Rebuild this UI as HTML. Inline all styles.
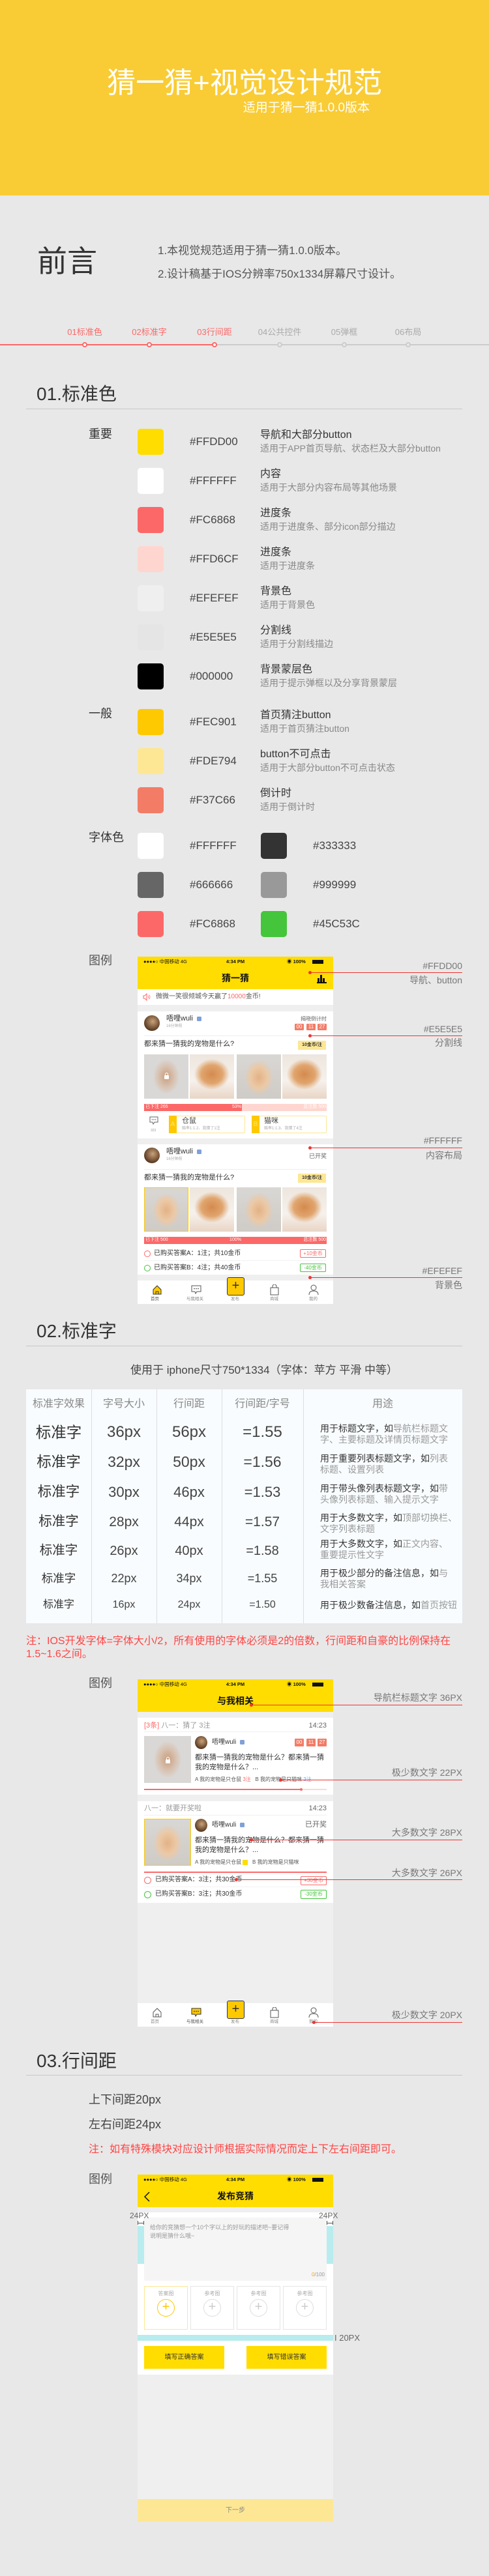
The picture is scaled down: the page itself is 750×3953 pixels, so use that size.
<!DOCTYPE html>
<html><head><meta charset="utf-8">
<style>
*{margin:0;padding:0;box-sizing:border-box}
body{width:750px;height:3953px;background:#E8E8E8;position:relative;overflow:hidden;font-family:"Liberation Sans","Noto Sans CJK SC",sans-serif;color:#333}
.a{position:absolute}
.t{position:absolute;white-space:nowrap;line-height:1.2}
.sw{position:absolute;width:40px;height:40px;border-radius:5px}
.ph{position:absolute;width:300px;height:533px;background:#EFEFEF;overflow:hidden}
.ln{position:absolute;height:1px;background:#E33}
.dot{position:absolute;width:5px;height:5px;border-radius:50%;background:#E33}
.an{position:absolute;right:41px;font-size:14px;color:#777;white-space:nowrap;line-height:1.2}
.g{color:#999}
.kit{background:radial-gradient(ellipse 40% 35% at 50% 45%,#D48A4E 0,#E0A56E 60%,rgba(240,225,210,0) 100%),linear-gradient(#EDE6DE,#F6F1EC 60%,#E9D6C6)}
.ham{background:radial-gradient(ellipse 32% 40% at 50% 52%,#E3B286 0,#EBC9A6 60%,rgba(210,205,200,0) 100%),linear-gradient(#D9D7D4,#CFCBC6)}
.blur{background:radial-gradient(ellipse 30% 40% at 50% 50%,#C99E7E 0,#D8C2B2 60%,#DAD8D6 100%)}
</style></head><body>

<!-- banner -->
<div class="a" style="left:0;top:0;width:750px;height:300px;background:#F9CC35"></div>
<div class="t" style="left:0;width:750px;text-align:center;top:102px;font-size:44px;color:#fff">猜一猜+视觉设计规范</div>
<div class="t" style="right:183px;top:155px;font-size:19px;color:#fff">适用于猜一猜1.0.0版本</div>

<!-- preface -->
<div class="t" style="left:57px;top:374px;font-size:46px;color:#333">前言</div>
<div class="t" style="left:242px;top:375px;font-size:17px;color:#555">1.本视觉规范适用于猜一猜1.0.0版本。</div>
<div class="t" style="left:242px;top:411px;font-size:17px;color:#555">2.设计稿基于IOS分辨率750x1334屏幕尺寸设计。</div>

<!-- nav -->
<div class="t" style="left:80px;width:100px;text-align:center;top:502px;font-size:13px;color:#FC6868">01标准色</div>
<div class="t" style="left:179px;width:100px;text-align:center;top:502px;font-size:13px;color:#FC6868">02标准字</div>
<div class="t" style="left:279px;width:100px;text-align:center;top:502px;font-size:13px;color:#FC6868">03行间距</div>
<div class="t" style="left:379px;width:100px;text-align:center;top:502px;font-size:13px;color:#AAA">04公共控件</div>
<div class="t" style="left:478px;width:100px;text-align:center;top:502px;font-size:13px;color:#AAA">05弹框</div>
<div class="t" style="left:576px;width:100px;text-align:center;top:502px;font-size:13px;color:#AAA">06布局</div>
<div class="a" style="left:0;top:528px;width:329px;height:2px;background:#FC6868"></div>
<div class="a" style="left:329px;top:528px;width:421px;height:2px;background:#CCC"></div>
<div class="a" style="left:126px;top:525px;width:8px;height:8px;border-radius:50%;background:#fff;border:2px solid #FC6868"></div>
<div class="a" style="left:225px;top:525px;width:8px;height:8px;border-radius:50%;background:#fff;border:2px solid #FC6868"></div>
<div class="a" style="left:325px;top:525px;width:8px;height:8px;border-radius:50%;background:#fff;border:2px solid #FC6868"></div>
<div class="a" style="left:425px;top:525px;width:8px;height:8px;border-radius:50%;background:#E8E8E8;border:2px solid #CCC"></div>
<div class="a" style="left:524px;top:525px;width:8px;height:8px;border-radius:50%;background:#E8E8E8;border:2px solid #CCC"></div>
<div class="a" style="left:622px;top:525px;width:8px;height:8px;border-radius:50%;background:#E8E8E8;border:2px solid #CCC"></div>

<!-- 01 -->
<div class="t" style="left:56px;top:588px;font-size:28px;color:#333">01.标准色</div>
<div class="a" style="left:40px;top:627px;width:669px;height:1px;background:#C8C8C8"></div>

<div class="t" style="left:136px;top:656px;font-size:18px">重要</div>
<div class="t" style="left:136px;top:1085px;font-size:18px">一般</div>
<div class="t" style="left:136px;top:1275px;font-size:18px">字体色</div>

<div class="sw" style="left:211px;top:658px;background:#FFDD00"></div>
<div class="t" style="left:291px;top:668px;font-size:17px;color:#444">#FFDD00</div>
<div class="t" style="left:399px;top:658px;font-size:16px">导航和大部分button</div>
<div class="t" style="left:399px;top:680px;font-size:14px;color:#888">适用于APP首页导航、状态栏及大部分button</div>

<div class="sw" style="left:211px;top:718px;background:#FFFFFF"></div>
<div class="t" style="left:291px;top:728px;font-size:17px;color:#444">#FFFFFF</div>
<div class="t" style="left:399px;top:718px;font-size:16px">内容</div>
<div class="t" style="left:399px;top:740px;font-size:14px;color:#888">适用于大部分内容布局等其他场景</div>

<div class="sw" style="left:211px;top:778px;background:#FC6868"></div>
<div class="t" style="left:291px;top:788px;font-size:17px;color:#444">#FC6868</div>
<div class="t" style="left:399px;top:778px;font-size:16px">进度条</div>
<div class="t" style="left:399px;top:800px;font-size:14px;color:#888">适用于进度条、部分icon部分描边</div>

<div class="sw" style="left:211px;top:838px;background:#FFD6CF"></div>
<div class="t" style="left:291px;top:848px;font-size:17px;color:#444">#FFD6CF</div>
<div class="t" style="left:399px;top:838px;font-size:16px">进度条</div>
<div class="t" style="left:399px;top:860px;font-size:14px;color:#888">适用于进度条</div>

<div class="sw" style="left:211px;top:898px;background:#EFEFEF"></div>
<div class="t" style="left:291px;top:908px;font-size:17px;color:#444">#EFEFEF</div>
<div class="t" style="left:399px;top:898px;font-size:16px">背景色</div>
<div class="t" style="left:399px;top:920px;font-size:14px;color:#888">适用于背景色</div>

<div class="sw" style="left:211px;top:958px;background:#E5E5E5"></div>
<div class="t" style="left:291px;top:968px;font-size:17px;color:#444">#E5E5E5</div>
<div class="t" style="left:399px;top:958px;font-size:16px">分割线</div>
<div class="t" style="left:399px;top:980px;font-size:14px;color:#888">适用于分割线描边</div>

<div class="sw" style="left:211px;top:1018px;background:#000000"></div>
<div class="t" style="left:291px;top:1028px;font-size:17px;color:#444">#000000</div>
<div class="t" style="left:399px;top:1018px;font-size:16px">背景蒙层色</div>
<div class="t" style="left:399px;top:1040px;font-size:14px;color:#888">适用于提示弹框以及分享背景蒙层</div>

<div class="sw" style="left:211px;top:1088px;background:#FEC901"></div>
<div class="t" style="left:291px;top:1098px;font-size:17px;color:#444">#FEC901</div>
<div class="t" style="left:399px;top:1088px;font-size:16px">首页猜注button</div>
<div class="t" style="left:399px;top:1110px;font-size:14px;color:#888">适用于首页猜注button</div>

<div class="sw" style="left:211px;top:1148px;background:#FDE794"></div>
<div class="t" style="left:291px;top:1158px;font-size:17px;color:#444">#FDE794</div>
<div class="t" style="left:399px;top:1148px;font-size:16px">button不可点击</div>
<div class="t" style="left:399px;top:1170px;font-size:14px;color:#888">适用于大部分button不可点击状态</div>

<div class="sw" style="left:211px;top:1208px;background:#F37C66"></div>
<div class="t" style="left:291px;top:1218px;font-size:17px;color:#444">#F37C66</div>
<div class="t" style="left:399px;top:1208px;font-size:16px">倒计时</div>
<div class="t" style="left:399px;top:1230px;font-size:14px;color:#888">适用于倒计时</div>

<div class="sw" style="left:211px;top:1278px;background:#FFFFFF"></div>
<div class="t" style="left:291px;top:1288px;font-size:17px;color:#444">#FFFFFF</div>
<div class="sw" style="left:400px;top:1278px;background:#333333"></div>
<div class="t" style="left:480px;top:1288px;font-size:17px;color:#444">#333333</div>
<div class="sw" style="left:211px;top:1338px;background:#666666"></div>
<div class="t" style="left:291px;top:1348px;font-size:17px;color:#444">#666666</div>
<div class="sw" style="left:400px;top:1338px;background:#999999"></div>
<div class="t" style="left:480px;top:1348px;font-size:17px;color:#444">#999999</div>
<div class="sw" style="left:211px;top:1398px;background:#FC6868"></div>
<div class="t" style="left:291px;top:1408px;font-size:17px;color:#444">#FC6868</div>
<div class="sw" style="left:400px;top:1398px;background:#45C53C"></div>
<div class="t" style="left:480px;top:1408px;font-size:17px;color:#444">#45C53C</div>

<div class="t" style="left:136px;top:1464px;font-size:18px;color:#555">图例</div>

<!-- phone 1 -->
<div class="ph" style="left:211px;top:1468px">
 <div class="a" style="left:0;top:0;width:300px;height:50px;background:#FFDD00"></div>
 <div class="t" style="left:9px;top:3px;font-size:7.5px;color:#111">●●●●○ 中国移动 4G</div>
 <div class="t" style="left:0;width:300px;text-align:center;top:3px;font-size:7.5px;color:#111;font-weight:bold">4:34 PM</div>
 <div class="t" style="left:229px;top:3px;font-size:7.5px;color:#111;font-weight:bold">◉ 100%</div>
 <div class="a" style="left:268px;top:5px;width:17px;height:6px;background:#111"></div>
 <div class="t" style="left:0;width:300px;text-align:center;top:25px;font-size:14px;color:#111;font-weight:bold">猜一猜</div>
 <div class="a" style="left:275px;top:39px;width:15px;height:2px;background:#111"></div>
 <div class="a" style="left:276px;top:33px;width:3px;height:7px;background:#111"></div>
 <div class="a" style="left:280px;top:28px;width:3px;height:12px;background:#111"></div>
 <div class="a" style="left:284px;top:33px;width:3px;height:7px;background:#111"></div>

 <div class="a" style="left:0;top:50px;width:300px;height:24px;background:#fff"></div>
 <svg class="a" style="left:8px;top:56px" width="12" height="12" viewBox="0 0 12 12"><path d="M1 4h2l3-3v10L3 8H1z" fill="none" stroke="#FC6868" stroke-width="1"/><path d="M8 4q1.5 2 0 4M9.5 2.5q3 3.5 0 7" fill="none" stroke="#FC6868" stroke-width="0.8"/></svg>
 <div class="t" style="left:28px;top:56px;font-size:10px;color:#555">微微一笑很倾城今天赢了<span style="color:#FC6868">10000</span>金币!</div>

 <div class="a" style="left:0;top:84px;width:300px;height:195px;background:#fff"></div>
 <div class="a" style="left:10px;top:90px;width:24px;height:24px;border-radius:50%;background:radial-gradient(circle at 55% 40%,#C9A27A,#5A3A22 70%)"></div>
 <div class="t" style="left:44px;top:89px;font-size:11px;color:#333">唔哩wuli</div>
 <div class="a" style="left:91px;top:92px;width:7px;height:7px;border-radius:1.5px;background:#7FA0D8"></div>
 <div class="t" style="left:44px;top:104px;font-size:6px;color:#AAA">16分钟前</div>
 <div class="t" style="right:10px;top:91px;font-size:8px;color:#666">揭晓倒计时</div>
 <div class="a" style="left:241px;top:103px;width:14px;height:10px;background:#F37C66;border-radius:1px;color:#fff;font-size:8px;line-height:10px;text-align:center">00</div>
 <div class="a" style="left:259px;top:103px;width:14px;height:10px;background:#F37C66;border-radius:1px;color:#fff;font-size:8px;line-height:10px;text-align:center">11</div>
 <div class="a" style="left:276px;top:103px;width:14px;height:10px;background:#F37C66;border-radius:1px;color:#fff;font-size:8px;line-height:10px;text-align:center">27</div>
 <div class="a" style="left:10px;top:121px;width:280px;height:1px;background:#EEE"></div>
 <div class="t" style="left:10px;top:128px;font-size:11px;color:#333">都来猜一猜我的宠物是什么?</div>
 <div class="a" style="left:246px;top:129px;width:43px;height:14px;background:#FDE794;font-size:7px;line-height:14px;text-align:center;color:#333;font-weight:bold">10金币/注</div>
 <div class="a blur" style="left:10px;top:150px;width:68px;height:68px"></div>
 <div class="a" style="left:41px;top:182px;width:7px;height:6px;background:#fff;border-radius:1px"></div>
 <div class="a" style="left:42px;top:178px;width:5px;height:6px;border:1.2px solid #fff;border-radius:3px 3px 0 0"></div>
 <div class="a kit" style="left:80px;top:150px;width:68px;height:68px"></div>
 <div class="a ham" style="left:152px;top:150px;width:68px;height:68px"></div>
 <div class="a kit" style="left:222px;top:150px;width:68px;height:68px"></div>
 <div class="a" style="left:10px;top:226px;width:150px;height:11px;background:#FC6868"></div>
 <div class="a" style="left:160px;top:226px;width:130px;height:11px;background:#FFD6CF"></div>
 <div class="t" style="left:12px;top:227px;font-size:7px;color:#fff">已下注 265</div>
 <div class="t" style="left:145px;top:227px;font-size:7px;color:#fff">53%</div>
 <div class="t" style="right:11px;top:227px;font-size:7px;color:#fff">总注数 500</div>
 <svg class="a" style="left:18px;top:245px" width="14" height="13" viewBox="0 0 14 13"><path d="M1 1h12v8H8l-2 3-1-3H1z" fill="none" stroke="#666" stroke-width="1"/><circle cx="4.5" cy="5" r=".8" fill="#666"/><circle cx="7" cy="5" r=".8" fill="#666"/><circle cx="9.5" cy="5" r=".8" fill="#666"/></svg>
 <div class="t" style="left:20px;top:264px;font-size:5px;color:#999">323</div>
 <div class="a" style="left:48px;top:244px;width:117px;height:27px;border:1px solid #FDE794;border-radius:2px;background:#fff"></div>
 <div class="a" style="left:48px;top:244px;width:12px;height:27px;background:#FEC901;color:#FFE66A;font-size:10px;line-height:27px;text-align:center">A</div>
 <div class="t" style="left:68px;top:246px;font-size:11px;color:#444">仓鼠</div>
 <div class="t" style="left:68px;top:261px;font-size:6px;color:#AAA">赔率1:1.2、我猜了1注</div>
 <div class="a" style="left:175px;top:244px;width:115px;height:27px;border:1px solid #FDE794;border-radius:2px;background:#fff"></div>
 <div class="a" style="left:175px;top:244px;width:12px;height:27px;background:#FEC901;color:#FFE66A;font-size:10px;line-height:27px;text-align:center">B</div>
 <div class="t" style="left:194px;top:246px;font-size:11px;color:#444">猫咪</div>
 <div class="t" style="left:194px;top:261px;font-size:6px;color:#AAA">赔率1:1.3、我猜了4注</div>

 <div class="a" style="left:0;top:288px;width:300px;height:200px;background:#fff"></div>
 <div class="a" style="left:10px;top:293px;width:24px;height:24px;border-radius:50%;background:radial-gradient(circle at 55% 40%,#C9A27A,#5A3A22 70%)"></div>
 <div class="t" style="left:44px;top:293px;font-size:11px;color:#333">唔哩wuli</div>
 <div class="a" style="left:91px;top:296px;width:7px;height:7px;border-radius:1.5px;background:#7FA0D8"></div>
 <div class="t" style="left:44px;top:308px;font-size:6px;color:#AAA">16分钟前</div>
 <div class="t" style="right:10px;top:301px;font-size:9px;color:#666">已开奖</div>
 <div class="a" style="left:10px;top:326px;width:280px;height:1px;background:#EEE"></div>
 <div class="t" style="left:10px;top:333px;font-size:11px;color:#333">都来猜一猜我的宠物是什么?</div>
 <div class="a" style="left:246px;top:333px;width:43px;height:14px;background:#FDE794;font-size:7px;line-height:14px;text-align:center;color:#333;font-weight:bold">10金币/注</div>
 <div class="a ham" style="left:10px;top:354px;width:68px;height:68px;border:1px solid #FEC901"></div>
 <div class="a kit" style="left:80px;top:354px;width:68px;height:68px"></div>
 <div class="a ham" style="left:152px;top:354px;width:68px;height:68px"></div>
 <div class="a kit" style="left:222px;top:354px;width:68px;height:68px"></div>
 <div class="a" style="left:10px;top:430px;width:280px;height:11px;background:#FC6868"></div>
 <div class="t" style="left:12px;top:431px;font-size:7px;color:#fff">已下注 500</div>
 <div class="t" style="left:0;width:300px;text-align:center;top:431px;font-size:7px;color:#fff">100%</div>
 <div class="t" style="right:11px;top:431px;font-size:7px;color:#fff">总注数 500</div>
 <div class="a" style="left:10px;top:451px;width:10px;height:10px;border:1px solid #FC6868;border-radius:50%"></div>
 <div class="t" style="left:25px;top:450px;font-size:10px;color:#333">已购买答案A：1注；共10金币</div>
 <div class="a" style="left:249px;top:449px;width:40px;height:13px;border:1px solid #FC6868;border-radius:2px;color:#FC6868;font-size:8px;line-height:11px;text-align:center">+10金币</div>
 <div class="a" style="left:10px;top:466px;width:280px;height:1px;background:#F2F2F2"></div>
 <div class="a" style="left:10px;top:473px;width:10px;height:10px;border:1px solid #45C53C;border-radius:50%"></div>
 <div class="t" style="left:25px;top:472px;font-size:10px;color:#333">已购买答案B：4注；共40金币</div>
 <div class="a" style="left:249px;top:471px;width:40px;height:13px;border:1px solid #45C53C;border-radius:2px;color:#45C53C;font-size:8px;line-height:11px;text-align:center">-40金币</div>

 <div class="a" style="left:0;top:497px;width:300px;height:36px;background:#fff"></div>
 <svg class="a" style="left:22px;top:503px" width="16" height="16" viewBox="0 0 16 16"><path d="M2 8L8 2l6 6v7H2z" fill="#FEC901" stroke="#333" stroke-width="1"/><path d="M6 15v-4h4v4" fill="none" stroke="#333" stroke-width="1"/></svg>
 <div class="t" style="left:20px;top:522px;font-size:6.5px;color:#555">首页</div>
 <svg class="a" style="left:82px;top:504px" width="16" height="15" viewBox="0 0 16 15"><path d="M1 1h14v9H9l-2 3-1-3H1z" fill="none" stroke="#555" stroke-width="1"/><circle cx="5" cy="5.5" r=".9" fill="#555"/><circle cx="8" cy="5.5" r=".9" fill="#555"/><circle cx="11" cy="5.5" r=".9" fill="#555"/></svg>
 <div class="t" style="left:75px;top:522px;font-size:6.5px;color:#888">与我相关</div>
 <div class="a" style="left:137px;top:492px;width:27px;height:28px;background:#FEC901;border:1.5px solid #333;border-radius:3px;font-size:20px;line-height:24px;text-align:center;color:#333">+</div>
 <div class="t" style="left:143px;top:522px;font-size:6.5px;color:#888">发布</div>
 <svg class="a" style="left:202px;top:503px" width="16" height="17" viewBox="0 0 16 17"><path d="M2 5h12v11H2z" fill="none" stroke="#555" stroke-width="1"/><path d="M5 5V3a3 3 0 0 1 6 0v2" fill="none" stroke="#555" stroke-width="1"/></svg>
 <div class="t" style="left:203px;top:522px;font-size:6.5px;color:#888">商城</div>
 <svg class="a" style="left:262px;top:503px" width="16" height="17" viewBox="0 0 16 17"><circle cx="8" cy="5" r="4" fill="none" stroke="#555" stroke-width="1"/><path d="M1 16q0-6 7-6t7 6" fill="none" stroke="#555" stroke-width="1"/></svg>
 <div class="t" style="left:263px;top:522px;font-size:6.5px;color:#888">我的</div>
</div>

<!-- annotations 1 -->
<div class="an" style="top:1474px">#FFDD00</div>
<div class="an" style="top:1496px">导航、button</div>
<div class="ln" style="left:475px;top:1492px;width:234px"></div><div class="dot" style="left:473px;top:1490px"></div>
<div class="an" style="top:1571px">#E5E5E5</div>
<div class="an" style="top:1592px">分割线</div>
<div class="ln" style="left:475px;top:1589px;width:234px"></div><div class="dot" style="left:473px;top:1587px"></div>
<div class="an" style="top:1742px">#FFFFFF</div>
<div class="an" style="top:1765px">内容布局</div>
<div class="ln" style="left:475px;top:1761px;width:234px"></div><div class="dot" style="left:473px;top:1759px"></div>
<div class="an" style="top:1942px">#EFEFEF</div>
<div class="an" style="top:1964px">背景色</div>
<div class="ln" style="left:475px;top:1960px;width:234px"></div><div class="dot" style="left:473px;top:1958px"></div>

<!-- 02 -->
<div class="t" style="left:56px;top:2026px;font-size:28px;color:#333">02.标准字</div>
<div class="a" style="left:40px;top:2065px;width:669px;height:1px;background:#C8C8C8"></div>
<div class="t" style="left:200px;top:2093px;font-size:17px;color:#444">使用于 iphone尺寸750*1334（字体：苹方 平滑 中等）</div>

<div class="a" style="left:40px;top:2132px;width:669px;height:359px;background:#F8FCFE"></div>
<div class="a" style="left:140px;top:2132px;width:1px;height:359px;background:#DDD"></div>
<div class="a" style="left:240px;top:2132px;width:1px;height:359px;background:#DDD"></div>
<div class="a" style="left:340px;top:2132px;width:1px;height:359px;background:#DDD"></div>
<div class="a" style="left:465px;top:2132px;width:1px;height:359px;background:#DDD"></div>

<div class="t" style="left:40px;width:100px;text-align:center;top:2145px;font-size:16px;color:#888">标准字效果</div>
<div class="t" style="left:140px;width:100px;text-align:center;top:2145px;font-size:16px;color:#888">字号大小</div>
<div class="t" style="left:240px;width:100px;text-align:center;top:2145px;font-size:16px;color:#888">行间距</div>
<div class="t" style="left:340px;width:125px;text-align:center;top:2145px;font-size:16px;color:#888">行间距/字号</div>
<div class="t" style="left:465px;width:244px;text-align:center;top:2145px;font-size:16px;color:#888">用途</div>

<div class="t" style="left:40px;width:100px;text-align:center;top:2184px;font-size:23.5px">标准字</div>
<div class="t" style="left:140px;width:100px;text-align:center;top:2184px;font-size:24px;color:#444">36px</div>
<div class="t" style="left:240px;width:100px;text-align:center;top:2184px;font-size:24px;color:#444">56px</div>
<div class="t" style="left:340px;width:125px;text-align:center;top:2184px;font-size:24px;color:#444">=1.55</div>

<div class="t" style="left:40px;width:100px;text-align:center;top:2230px;font-size:22.5px">标准字</div>
<div class="t" style="left:140px;width:100px;text-align:center;top:2230px;font-size:23px;color:#444">32px</div>
<div class="t" style="left:240px;width:100px;text-align:center;top:2230px;font-size:23px;color:#444">50px</div>
<div class="t" style="left:340px;width:125px;text-align:center;top:2230px;font-size:23px;color:#444">=1.56</div>

<div class="t" style="left:40px;width:100px;text-align:center;top:2277px;font-size:21.5px">标准字</div>
<div class="t" style="left:140px;width:100px;text-align:center;top:2277px;font-size:22px;color:#444">30px</div>
<div class="t" style="left:240px;width:100px;text-align:center;top:2277px;font-size:22px;color:#444">46px</div>
<div class="t" style="left:340px;width:125px;text-align:center;top:2277px;font-size:22px;color:#444">=1.53</div>

<div class="t" style="left:40px;width:100px;text-align:center;top:2323px;font-size:20.5px">标准字</div>
<div class="t" style="left:140px;width:100px;text-align:center;top:2323px;font-size:21px;color:#444">28px</div>
<div class="t" style="left:240px;width:100px;text-align:center;top:2323px;font-size:21px;color:#444">44px</div>
<div class="t" style="left:340px;width:125px;text-align:center;top:2323px;font-size:21px;color:#444">=1.57</div>

<div class="t" style="left:40px;width:100px;text-align:center;top:2368px;font-size:19.5px">标准字</div>
<div class="t" style="left:140px;width:100px;text-align:center;top:2368px;font-size:20px;color:#444">26px</div>
<div class="t" style="left:240px;width:100px;text-align:center;top:2368px;font-size:20px;color:#444">40px</div>
<div class="t" style="left:340px;width:125px;text-align:center;top:2368px;font-size:20px;color:#444">=1.58</div>

<div class="t" style="left:40px;width:100px;text-align:center;top:2412px;font-size:17.5px">标准字</div>
<div class="t" style="left:140px;width:100px;text-align:center;top:2412px;font-size:18px;color:#444">22px</div>
<div class="t" style="left:240px;width:100px;text-align:center;top:2412px;font-size:18px;color:#444">34px</div>
<div class="t" style="left:340px;width:125px;text-align:center;top:2412px;font-size:18px;color:#444">=1.55</div>

<div class="t" style="left:40px;width:100px;text-align:center;top:2453px;font-size:16px">标准字</div>
<div class="t" style="left:140px;width:100px;text-align:center;top:2453px;font-size:16px;color:#444">16px</div>
<div class="t" style="left:240px;width:100px;text-align:center;top:2453px;font-size:16px;color:#444">24px</div>
<div class="t" style="left:340px;width:125px;text-align:center;top:2453px;font-size:16px;color:#444">=1.50</div>

<div class="t" style="left:491px;top:2184px;font-size:14px;line-height:17px">用于标题文字，如<span class="g">导航栏标题文</span><br><span class="g">字、主要标题及详情页标题文字</span></div>
<div class="t" style="left:491px;top:2230px;font-size:14px;line-height:17px">用于重要列表标题文字，如<span class="g">列表</span><br><span class="g">标题、设置列表</span></div>
<div class="t" style="left:491px;top:2276px;font-size:14px;line-height:17px">用于带头像列表标题文字，如<span class="g">带</span><br><span class="g">头像列表标题、输入提示文字</span></div>
<div class="t" style="left:491px;top:2321px;font-size:14px;line-height:17px">用于大多数文字，如<span class="g">顶部切换栏、</span><br><span class="g">文字列表标题</span></div>
<div class="t" style="left:491px;top:2361px;font-size:14px;line-height:17px">用于大多数文字，如<span class="g">正文内容、</span><br><span class="g">重要提示性文字</span></div>
<div class="t" style="left:491px;top:2406px;font-size:14px;line-height:17px">用于极少部分的备注信息，如<span class="g">与</span><br><span class="g">我相关答案</span></div>
<div class="t" style="left:491px;top:2455px;font-size:14px;line-height:17px">用于极少数备注信息，如<span class="g">首页按钮</span></div>

<div class="t" style="left:40px;top:2509px;font-size:16px;line-height:20px;color:#F44">注：IOS开发字体=字体大小/2，所有使用的字体必须是2的倍数，行间距和自豪的比例保持在<br>1.5~1.6之间。</div>

<div class="t" style="left:136px;top:2573px;font-size:18px;color:#555">图例</div>

<!-- phone 2 -->
<div class="ph" style="left:211px;top:2577px">
 <div class="a" style="left:0;top:0;width:300px;height:50px;background:#FFDD00"></div>
 <div class="t" style="left:9px;top:3px;font-size:7.5px;color:#111">●●●●○ 中国移动 4G</div>
 <div class="t" style="left:0;width:300px;text-align:center;top:3px;font-size:7.5px;color:#111;font-weight:bold">4:34 PM</div>
 <div class="t" style="left:229px;top:3px;font-size:7.5px;color:#111;font-weight:bold">◉ 100%</div>
 <div class="a" style="left:268px;top:5px;width:17px;height:6px;background:#111"></div>
 <div class="t" style="left:0;width:300px;text-align:center;top:25px;font-size:14px;color:#111;font-weight:bold">与我相关</div>

 <div class="a" style="left:0;top:59px;width:300px;height:118px;background:#fff"></div>
 <div class="t" style="left:10px;top:65px;font-size:11px;color:#999"><span style="color:#FC6868">[3条]</span> 八一：猜了 3注</div>
 <div class="t" style="right:10px;top:65px;font-size:11px;color:#666">14:23</div>
 <div class="a" style="left:10px;top:80px;width:280px;height:1px;background:#F0F0F0"></div>
 <div class="a blur" style="left:10px;top:87px;width:72px;height:72px"></div>
 <div class="a" style="left:43px;top:123px;width:7px;height:6px;background:#fff;border-radius:1px"></div>
 <div class="a" style="left:44px;top:119px;width:5px;height:6px;border:1.2px solid #fff;border-radius:3px 3px 0 0"></div>
 <div class="a" style="left:88px;top:87px;width:19px;height:20px;border-radius:50%;background:radial-gradient(circle at 55% 40%,#C9A27A,#5A3A22 70%)"></div>
 <div class="t" style="left:114px;top:91px;font-size:10px;color:#333">唔哩wuli</div>
 <div class="a" style="left:157px;top:93px;width:7px;height:7px;border-radius:1.5px;background:#7FA0D8"></div>
 <div class="a" style="left:241px;top:91px;width:14px;height:12px;background:#F37C66;border-radius:1px;color:#fff;font-size:8px;line-height:12px;text-align:center">00</div>
 <div class="a" style="left:259px;top:91px;width:14px;height:12px;background:#F37C66;border-radius:1px;color:#fff;font-size:8px;line-height:12px;text-align:center">11</div>
 <div class="a" style="left:276px;top:91px;width:14px;height:12px;background:#F37C66;border-radius:1px;color:#fff;font-size:8px;line-height:12px;text-align:center">27</div>
 <div class="t" style="left:88px;top:113px;font-size:11px;line-height:15px;color:#333">都来猜一猜我的宠物是什么？都来猜一猜<br>我的宠物是什么？...</div>
 <div class="t" style="left:88px;top:149px;font-size:8px;color:#555">A 我的宠物是只仓鼠 <span style="color:#FC6868">3注</span>&nbsp;&nbsp; B 我的宠物是只猫咪 <span style="color:#7FA0D8">3注</span></div>
 <div class="a" style="left:10px;top:168px;width:241px;height:1.5px;background:#FC6868"></div>
 <div class="a" style="left:251px;top:168px;width:39px;height:1.5px;background:#FFD6CF"></div>
 <div class="a" style="left:249px;top:167px;width:4px;height:4px;border-radius:50%;background:#FC6868"></div>

 <div class="a" style="left:0;top:187px;width:300px;height:156px;background:#fff"></div>
 <div class="t" style="left:10px;top:192px;font-size:11px;color:#999">八一：就要开奖啦</div>
 <div class="t" style="right:10px;top:192px;font-size:11px;color:#666">14:23</div>
 <div class="a" style="left:10px;top:208px;width:280px;height:1px;background:#F0F0F0"></div>
 <div class="a ham" style="left:10px;top:214px;width:72px;height:72px;border:1px solid #FEC901"></div>
 <div class="a" style="left:88px;top:214px;width:19px;height:20px;border-radius:50%;background:radial-gradient(circle at 55% 40%,#C9A27A,#5A3A22 70%)"></div>
 <div class="t" style="left:114px;top:218px;font-size:10px;color:#333">唔哩wuli</div>
 <div class="a" style="left:157px;top:220px;width:7px;height:7px;border-radius:1.5px;background:#7FA0D8"></div>
 <div class="t" style="right:10px;top:217px;font-size:11px;color:#666">已开奖</div>
 <div class="t" style="left:88px;top:240px;font-size:11px;line-height:15px;color:#333">都来猜一猜我的宠物是什么？都来猜一猜<br>我的宠物是什么？...</div>
 <div class="t" style="left:88px;top:276px;font-size:8px;color:#555">A 我的宠物是只仓鼠 <span style="display:inline-block;width:8px;height:8px;background:#FFDD00;vertical-align:middle"></span>&nbsp;&nbsp; B 我的宠物是只猫咪</div>
 <div class="a" style="left:10px;top:295px;width:280px;height:1.5px;background:#FC6868"></div>
 <div class="a" style="left:10px;top:303px;width:11px;height:11px;border:1px solid #FC6868;border-radius:50%"></div>
 <div class="t" style="left:27px;top:302px;font-size:10px;color:#333">已购买答案A：3注；共30金币</div>
 <div class="a" style="left:250px;top:302px;width:40px;height:14px;border:1px solid #FC6868;border-radius:2px;color:#FC6868;font-size:8px;line-height:12px;text-align:center">+30金币</div>
 <div class="a" style="left:10px;top:318px;width:280px;height:1px;background:#F2F2F2"></div>
 <div class="a" style="left:10px;top:325px;width:11px;height:11px;border:1px solid #45C53C;border-radius:50%"></div>
 <div class="t" style="left:27px;top:324px;font-size:10px;color:#333">已购买答案B：3注；共30金币</div>
 <div class="a" style="left:250px;top:323px;width:40px;height:14px;border:1px solid #45C53C;border-radius:2px;color:#45C53C;font-size:8px;line-height:12px;text-align:center">-30金币</div>

 <div class="a" style="left:0;top:497px;width:300px;height:36px;background:#fff"></div>
 <svg class="a" style="left:22px;top:503px" width="16" height="16" viewBox="0 0 16 16"><path d="M2 8L8 2l6 6v7H2z" fill="none" stroke="#555" stroke-width="1"/><path d="M6 15v-4h4v4" fill="none" stroke="#555" stroke-width="1"/></svg>
 <div class="t" style="left:20px;top:522px;font-size:6.5px;color:#888">首页</div>
 <svg class="a" style="left:82px;top:504px" width="16" height="15" viewBox="0 0 16 15"><path d="M1 1h14v9H9l-2 3-1-3H1z" fill="#FEC901" stroke="#333" stroke-width="1"/><circle cx="5" cy="5.5" r=".9" fill="#333"/><circle cx="8" cy="5.5" r=".9" fill="#333"/><circle cx="11" cy="5.5" r=".9" fill="#333"/></svg>
 <div class="t" style="left:75px;top:522px;font-size:6.5px;color:#555">与我相关</div>
 <div class="a" style="left:137px;top:493px;width:27px;height:28px;background:#FEC901;border:1.5px solid #333;border-radius:3px;font-size:20px;line-height:24px;text-align:center;color:#333">+</div>
 <div class="t" style="left:143px;top:522px;font-size:6.5px;color:#888">发布</div>
 <svg class="a" style="left:202px;top:503px" width="16" height="17" viewBox="0 0 16 17"><path d="M2 5h12v11H2z" fill="none" stroke="#555" stroke-width="1"/><path d="M5 5V3a3 3 0 0 1 6 0v2" fill="none" stroke="#555" stroke-width="1"/></svg>
 <div class="t" style="left:203px;top:522px;font-size:6.5px;color:#888">商城</div>
 <svg class="a" style="left:262px;top:503px" width="16" height="17" viewBox="0 0 16 17"><circle cx="8" cy="5" r="4" fill="none" stroke="#555" stroke-width="1"/><path d="M1 16q0-6 7-6t7 6" fill="none" stroke="#555" stroke-width="1"/></svg>
 <div class="t" style="left:263px;top:522px;font-size:6.5px;color:#888">我的</div>
</div>

<!-- annotations 2 -->
<div class="an" style="top:2597px">导航栏标题文字 36PX</div>
<div class="ln" style="left:385px;top:2616px;width:324px"></div><div class="dot" style="left:383px;top:2614px"></div>
<div class="an" style="top:2712px">极少数文字 22PX</div>
<div class="ln" style="left:430px;top:2731px;width:279px"></div><div class="dot" style="left:428px;top:2729px"></div>
<div class="an" style="top:2804px">大多数文字 28PX</div>
<div class="ln" style="left:385px;top:2823px;width:324px"></div><div class="dot" style="left:383px;top:2821px"></div>
<div class="an" style="top:2866px">大多数文字 26PX</div>
<div class="ln" style="left:362px;top:2884px;width:347px"></div><div class="dot" style="left:360px;top:2882px"></div>
<div class="an" style="top:3084px">极少数文字 20PX</div>
<div class="ln" style="left:481px;top:3103px;width:228px"></div><div class="dot" style="left:479px;top:3101px"></div>

<!-- 03 -->
<div class="t" style="left:56px;top:3146px;font-size:28px;color:#333">03.行间距</div>
<div class="a" style="left:40px;top:3184px;width:669px;height:1px;background:#C8C8C8"></div>
<div class="t" style="left:136px;top:3212px;font-size:18px;color:#444">上下间距20px</div>
<div class="t" style="left:136px;top:3250px;font-size:18px;color:#444">左右间距24px</div>
<div class="t" style="left:136px;top:3289px;font-size:16px;color:#F44">注：如有特殊模块对应设计师根据实际情况而定上下左右间距即可。</div>
<div class="t" style="left:136px;top:3334px;font-size:18px;color:#555">图例</div>

<!-- phone 3 -->
<div class="ph" style="left:211px;top:3337px">
 <div class="a" style="left:0;top:0;width:300px;height:50px;background:#FFDD00"></div>
 <div class="t" style="left:9px;top:3px;font-size:7.5px;color:#111">●●●●○ 中国移动 4G</div>
 <div class="t" style="left:0;width:300px;text-align:center;top:3px;font-size:7.5px;color:#111;font-weight:bold">4:34 PM</div>
 <div class="t" style="left:229px;top:3px;font-size:7.5px;color:#111;font-weight:bold">◉ 100%</div>
 <div class="a" style="left:268px;top:5px;width:17px;height:6px;background:#111"></div>
 <svg class="a" style="left:10px;top:26px" width="9" height="16" viewBox="0 0 9 16"><path d="M8 1L1 8l7 7" fill="none" stroke="#111" stroke-width="1.5"/></svg>
 <div class="t" style="left:0;width:300px;text-align:center;top:25px;font-size:14px;color:#111;font-weight:bold">发布竞猜</div>

 <div class="a" style="left:0;top:58px;width:300px;height:249px;background:#fff"></div>
 <div class="a" style="left:0;top:79px;width:300px;height:58px;background:#B8ECEE"></div>
 <div class="a" style="left:10px;top:66px;width:280px;height:97px;background:#F5F5F5;border-radius:2px"></div>
 <div class="t" style="left:19px;top:75px;font-size:9px;line-height:13px;color:#999">给你的竞猜想一个10个字以上的好玩的描述吧~要记得<br>说明是猜什么哦~</div>
 <div class="t" style="right:13px;top:149px;font-size:8px;color:#999"><span style="color:#F5A623">0</span>/100</div>
 <div class="a" style="left:10px;top:171px;width:67px;height:67px;border:1px solid #FDE794"></div>
 <div class="a" style="left:81px;top:171px;width:67px;height:67px;border:1px solid #E5E5E5"></div>
 <div class="a" style="left:152px;top:171px;width:67px;height:67px;border:1px solid #E5E5E5"></div>
 <div class="a" style="left:223px;top:171px;width:67px;height:67px;border:1px solid #E5E5E5"></div>
 <div class="t" style="left:10px;width:67px;text-align:center;top:178px;font-size:8px;color:#AAA">答案图</div>
 <div class="t" style="left:81px;width:67px;text-align:center;top:178px;font-size:8px;color:#AAA">参考图</div>
 <div class="t" style="left:152px;width:67px;text-align:center;top:178px;font-size:8px;color:#AAA">参考图</div>
 <div class="t" style="left:223px;width:67px;text-align:center;top:178px;font-size:8px;color:#AAA">参考图</div>
 <div class="a" style="left:30px;top:191px;width:27px;height:27px;border:1px solid #FEC901;border-radius:50%;color:#FEC901;font-size:20px;line-height:23px;text-align:center">+</div>
 <div class="a" style="left:101px;top:191px;width:27px;height:27px;border:1px solid #DDD;border-radius:50%;color:#CCC;font-size:20px;line-height:23px;text-align:center">+</div>
 <div class="a" style="left:172px;top:191px;width:27px;height:27px;border:1px solid #DDD;border-radius:50%;color:#CCC;font-size:20px;line-height:23px;text-align:center">+</div>
 <div class="a" style="left:243px;top:191px;width:27px;height:27px;border:1px solid #DDD;border-radius:50%;color:#CCC;font-size:20px;line-height:23px;text-align:center">+</div>
 <div class="a" style="left:0;top:246px;width:300px;height:9px;background:#B8ECEE"></div>
 <div class="a" style="left:10px;top:263px;width:123px;height:35px;background:#FFDD00;font-size:10px;line-height:35px;text-align:center;color:#333">填写正确答案</div>
 <div class="a" style="left:167px;top:263px;width:123px;height:35px;background:#FFDD00;font-size:10px;line-height:35px;text-align:center;color:#333">填写错误答案</div>
 <div class="a" style="left:0;top:498px;width:300px;height:35px;background:#FDE794;font-size:10px;line-height:35px;text-align:center;color:#888">下一步</div>
</div>
<div class="t" style="left:199px;top:3393px;font-size:12px;color:#666">24PX</div>
<div class="t" style="left:489px;top:3393px;font-size:12px;color:#666">24PX</div>
<div class="a" style="left:211px;top:3408px;width:10px;height:6px;border-left:1px solid #555;border-right:1px solid #555"></div>
<div class="a" style="left:211px;top:3411px;width:10px;height:1px;background:#555"></div>
<div class="a" style="left:501px;top:3408px;width:10px;height:6px;border-left:1px solid #555;border-right:1px solid #555"></div>
<div class="a" style="left:501px;top:3411px;width:10px;height:1px;background:#555"></div>
<div class="t" style="left:513px;top:3580px;font-size:13px;color:#666">I 20PX</div>

</body></html>
